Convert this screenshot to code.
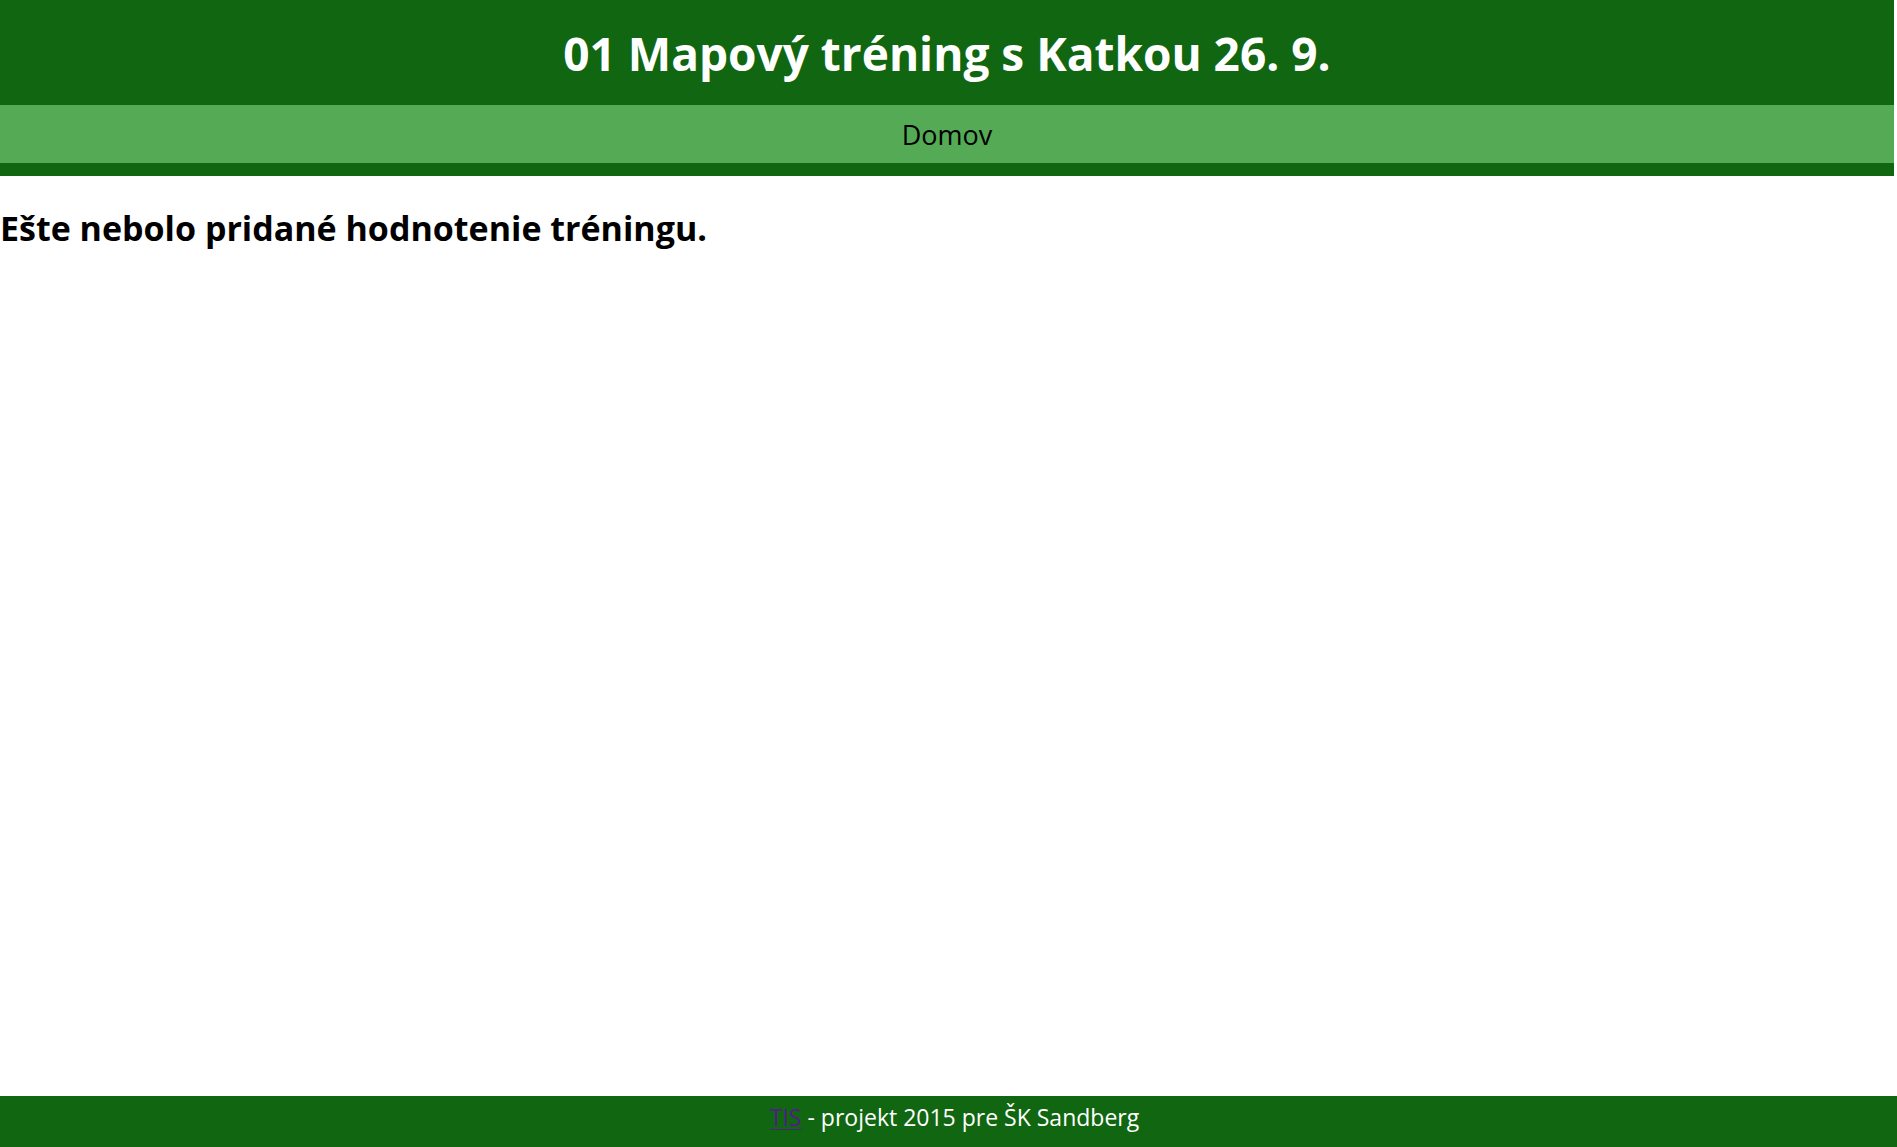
<div class="page">
  <header>
    <h1>01 Mapový tréning s Katkou 26. 9.</h1>
    <nav><a href="#home">Domov</a></nav>
  </header>
  <main>
    <h2>Ešte nebolo pridané hodnotenie tréningu.</h2>
  </main>
  <footer>
    <p><a href="#tis">TIS</a> - projekt 2015 pre ŠK Sandberg</p>
  </footer>
</div>

<style>
  :global(body) {
    margin: 0;
    background: #fff;
  }
  .page {
    display: flex;
    flex-direction: column;
    min-height: 100vh;
    font-family: "Trebuchet MS", "Open Sans", sans-serif;
  }
  header {
    margin-right: 3px;
    padding-bottom: 13px;
    background: #116611;
    text-align: center;
  }
  h1 {
    margin: 0;
    padding: 21px 0 20px;
    color: #fff;
    font-size: 46px;
    font-weight: 700;
    line-height: 64px;
  }
  nav {
    background: #55aa55;
  }
  nav a {
    display: block;
    padding-top: 2px;
    color: #000;
    font-size: 27px;
    line-height: 56px;
    text-decoration: none;
  }
  main {
    flex: 1;
  }
  h2 {
    margin: 32px 0;
    font-size: 34px;
    font-weight: 700;
    line-height: 40px;
  }
  footer {
    background: #116611;
    color: #fff;
    text-align: center;
  }
  p {
    margin: 0;
    padding: 0 0 8px 12px;
    font-size: 23px;
    line-height: 43px;
  }
  footer a {
    color: #551a8b;
    text-decoration-thickness: 1px;
    text-underline-offset: 3px;
  }
</style>
